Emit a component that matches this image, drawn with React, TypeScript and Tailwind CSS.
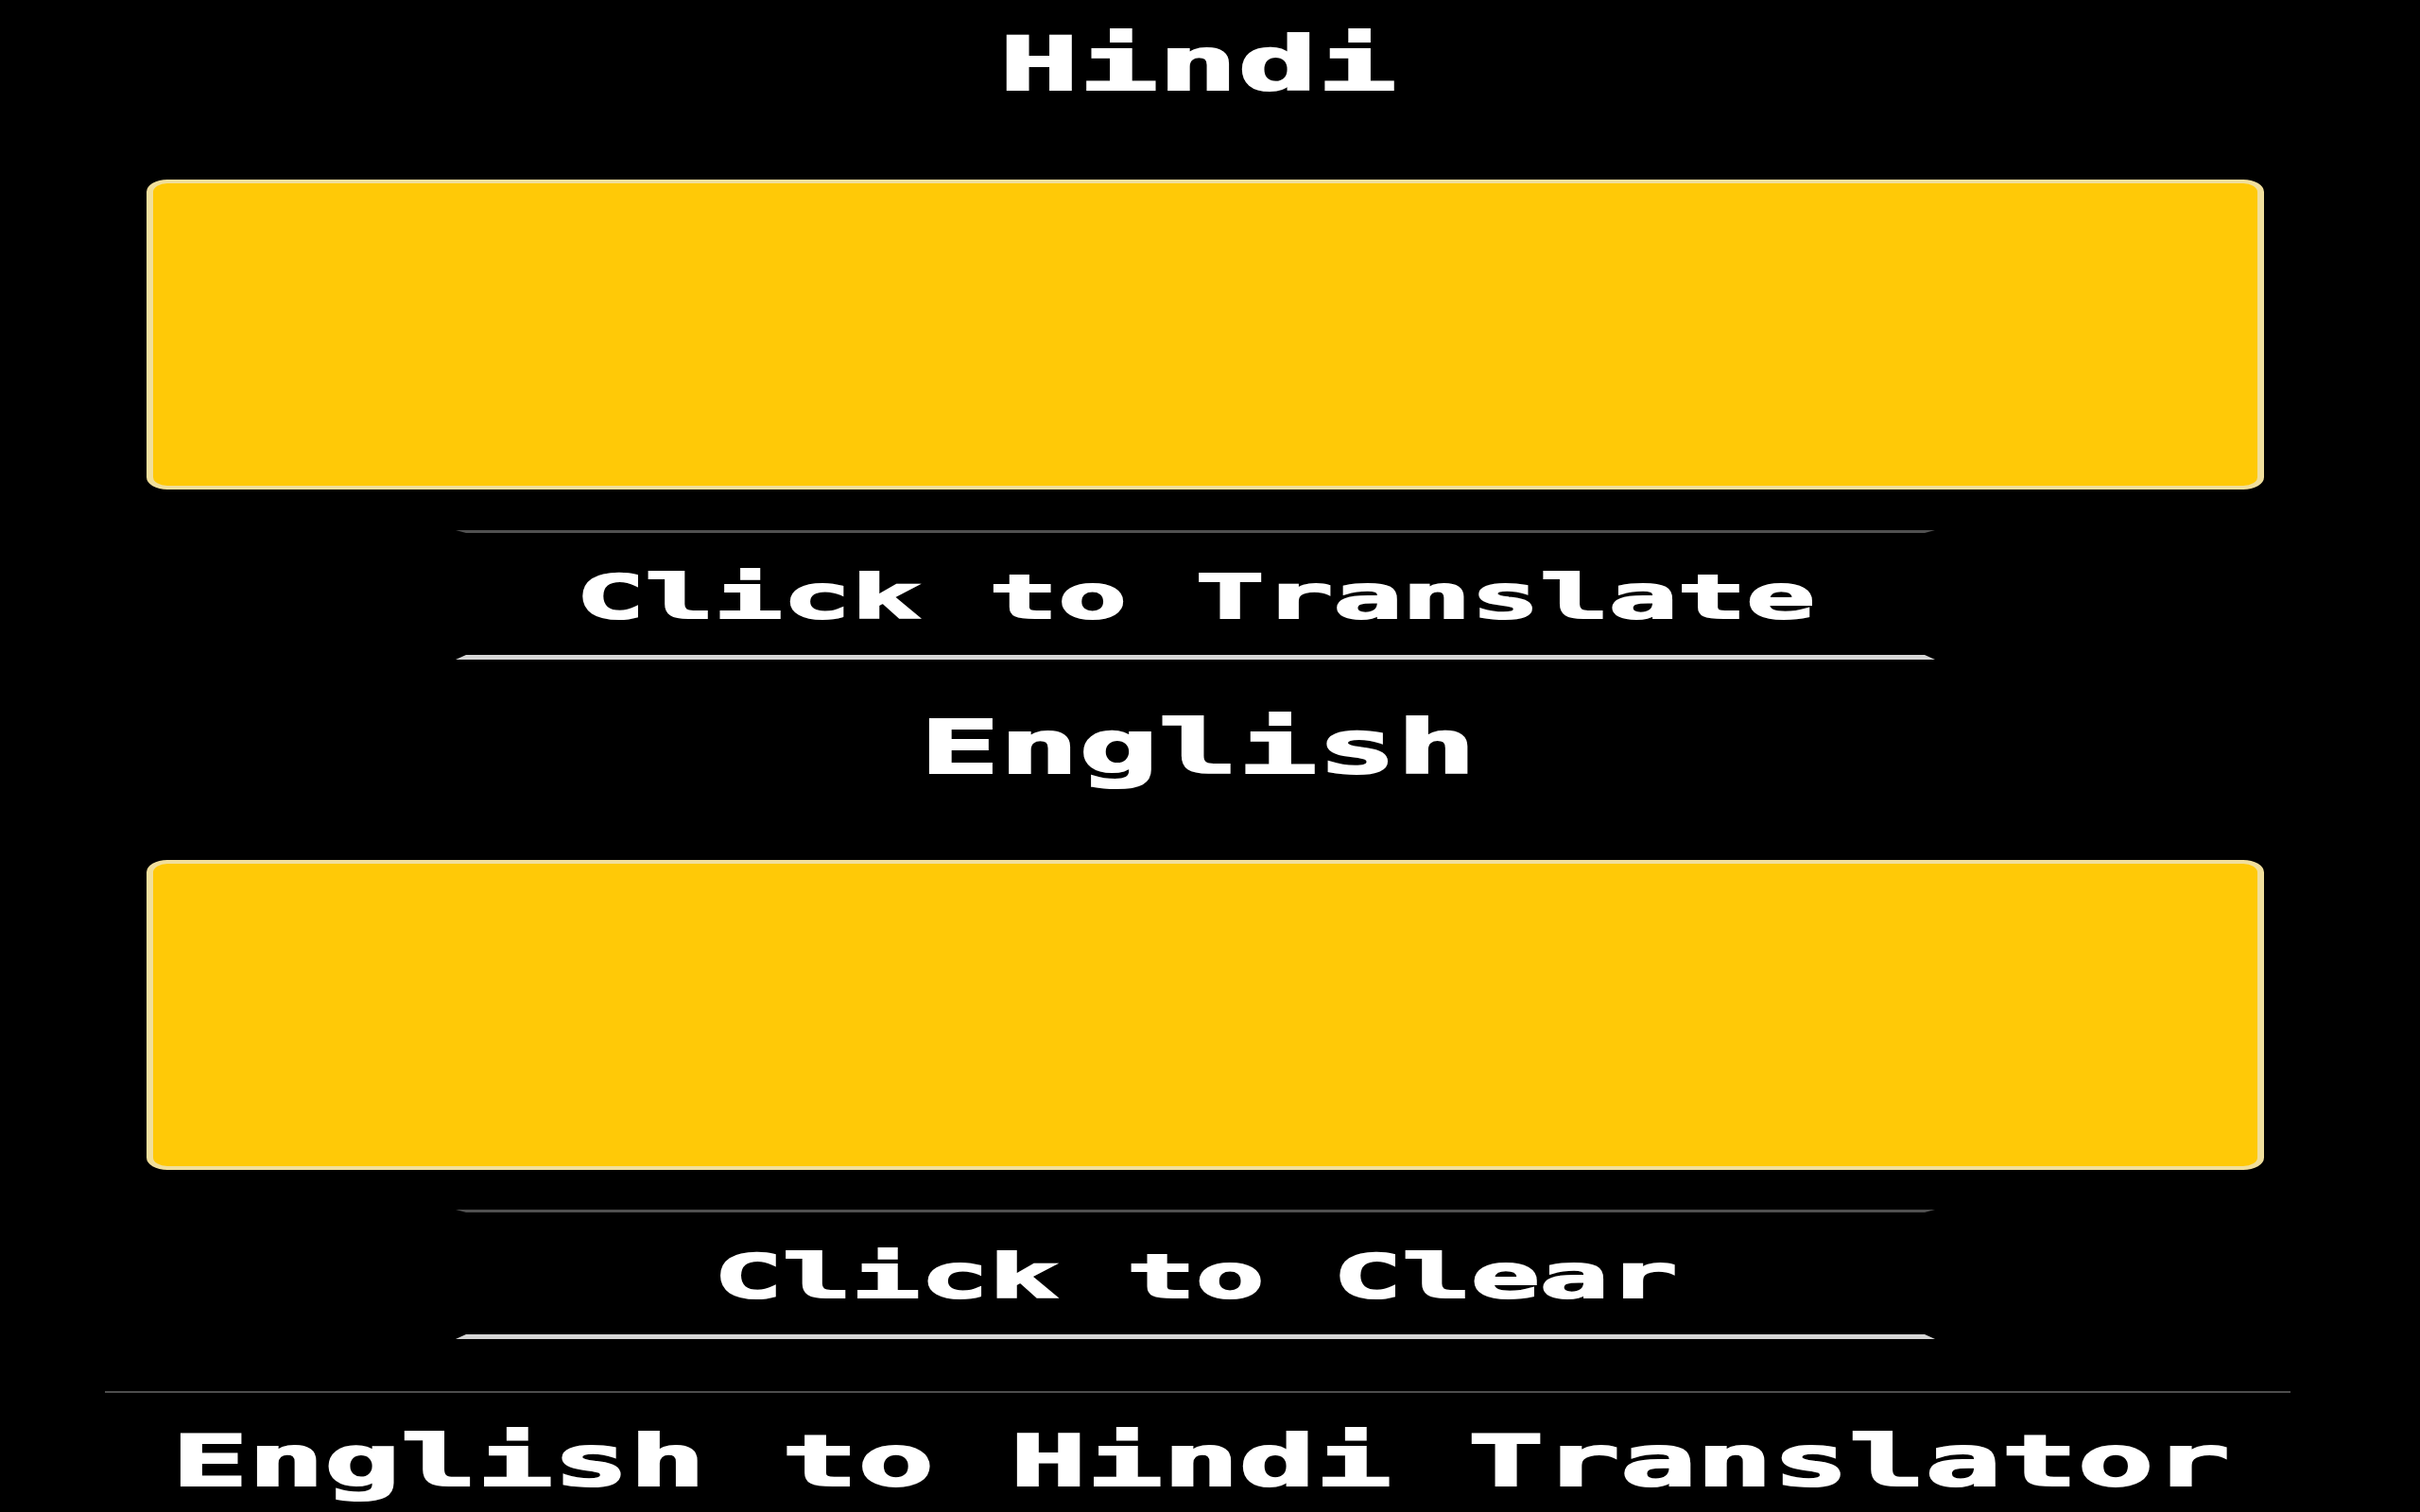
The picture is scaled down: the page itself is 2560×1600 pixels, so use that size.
import { useState } from 'react';

// Wide monospace look: each line of text is stretched on the x axis and slightly thickened.
const mono = "font-['DejaVu_Sans_Mono',monospace] font-bold [-webkit-text-stroke:2px_white]";

const LangLabel: React.FC<{ text: string; className?: string }> = ({ text, className }) => (
  <div className={`w-[2534px] flex justify-center ${className ?? ''}`}>
    <span className={`${mono} inline-block text-[78px] leading-[80px] text-white scale-x-[1.79]`}>{text}</span>
  </div>
);

const TextPanel: React.FC<{ value: string; onChange: (v: string) => void; className?: string }> = ({
  value,
  onChange,
  className,
}) => (
  <textarea
    value={value}
    onChange={(e) => onChange(e.target.value)}
    className={`ml-[155px] block w-[2240px] h-[328px] resize-none bg-[#ffc907] border-y-4 border-x-[7px] border-[#f1df9c] rounded-[22px/13px] outline-none p-6 text-black ${className ?? ''}`}
  />
);

const ActionButton: React.FC<{ label: string; onClick: () => void; className?: string }> = ({
  label,
  onClick,
  className,
}) => (
  <button
    onClick={onClick}
    className={`ml-[482px] w-[1565px] flex justify-center bg-black border-t-[3px] border-t-[#505050] border-b-[5px] border-b-[#d6d6d6] border-x-[11px] border-x-black pt-[36px] pb-[29px] cursor-pointer ${className ?? ''}`}
  >
    <span className={`${mono} inline-block text-[64px] leading-[64px] text-white scale-x-[1.89]`}>{label}</span>
  </button>
);

export default function App() {
  const [hindi, setHindi] = useState('');
  const [english, setEnglish] = useState('');

  return (
    <div className="w-[2560px] min-h-screen bg-black flex flex-col pt-[28px] pb-[17px]">
      <LangLabel text="Hindi" />
      <TextPanel value={hindi} onChange={setHindi} className="mt-[82px]" />
      <ActionButton label="Click to Translate" onClick={() => setEnglish(hindi)} className="mt-[43px]" />

      <LangLabel text="English" className="mt-[53px]" />
      <TextPanel value={english} onChange={setEnglish} className="mt-[79px]" />
      <ActionButton
        label="Click to Clear"
        onClick={() => {
          setHindi('');
          setEnglish('');
        }}
        className="mt-[42px]"
      />

      <footer className="ml-[111px] w-[2312px] mt-[55px] border-t-2 border-[#4d4d4d] pt-[35px] flex justify-center">
        <span className={`${mono} inline-block text-[74px] leading-[74px] text-white scale-x-[1.81] translate-x-[3px]`}>
          English to Hindi Translator
        </span>
      </footer>
    </div>
  );
}
